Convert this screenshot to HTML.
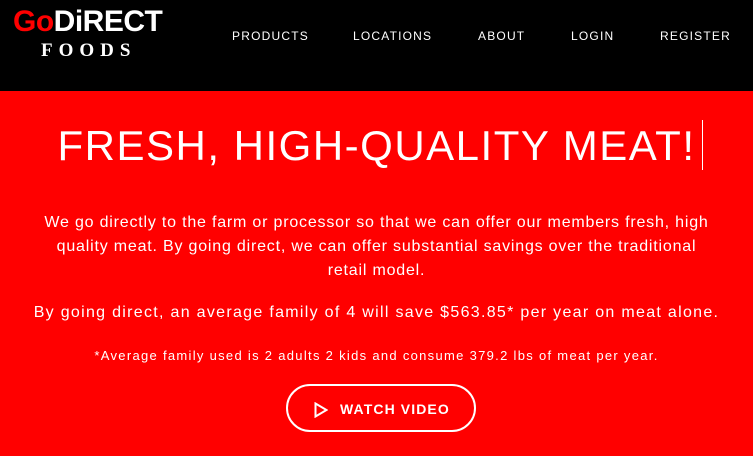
<!DOCTYPE html>
<html><head><style>
*{margin:0;padding:0;box-sizing:border-box}
body{width:753px;height:456px;overflow:hidden;background:#ff0000;font-family:"Liberation Sans",sans-serif;color:#fff;position:relative}
.hdr{position:absolute;left:0;top:0;width:753px;height:91px;background:#000}
.logo1{position:absolute;left:13px;top:6px;font-weight:bold;font-size:30px;letter-spacing:-0.5px;line-height:32px}
.logo1 .go{color:#f00}
.logo2{position:absolute;left:41px;top:40px;font-family:"Liberation Serif",serif;font-weight:bold;font-size:19px;letter-spacing:6px}
.nav a{position:absolute;top:29px;font-size:12px;letter-spacing:1.2px;color:#fff}
h1{position:absolute;top:118px;left:0;width:753px;text-align:center;font-weight:300;font-size:42px;letter-spacing:1.5px;line-height:56px}
.cur{position:absolute;left:702px;top:120px;width:1px;height:50px;background:#fff}
p{position:absolute;left:0;width:753px;text-align:center;font-size:16px;letter-spacing:0.8px;line-height:24px}
.btn{position:absolute;left:286px;top:384px;width:190px;height:48px;border:2px solid #fff;border-radius:24px;font-weight:bold;font-size:14px;letter-spacing:1.1px}
.btn span{position:absolute;left:52px;top:15px}
</style></head><body>
<div class="hdr">
<div class="logo1"><span class="go">Go</span>DiRECT</div>
<div class="logo2">FOODS</div>
<div class="nav"><a style="left:232px">PRODUCTS</a><a style="left:353px">LOCATIONS</a><a style="left:478px">ABOUT</a><a style="left:571px">LOGIN</a><a style="left:660px">REGISTER</a></div>
</div>
<h1>FRESH, HIGH-QUALITY MEAT!</h1><div class="cur"></div>
<p style="top:211px">We go directly to the farm or processor so that we can offer our members fresh, high<br>quality meat. By going direct, we can offer substantial savings over the traditional<br>retail model.</p>
<p style="top:301px;letter-spacing:1.3px">By going direct, an average family of 4 will save $563.85* per year on meat alone.</p>
<p style="top:344px;font-size:13px;letter-spacing:1.3px">*Average family used is 2 adults 2 kids and consume 379.2 lbs of meat per year.</p>
<div class="btn"><svg style="position:absolute;left:26px;top:16px" width="14" height="16"><path d="M1.5 1.5 L12.5 8 L1.5 14.5 Z" fill="none" stroke="#fff" stroke-width="2"/></svg><span>WATCH VIDEO</span></div>
</body></html>
